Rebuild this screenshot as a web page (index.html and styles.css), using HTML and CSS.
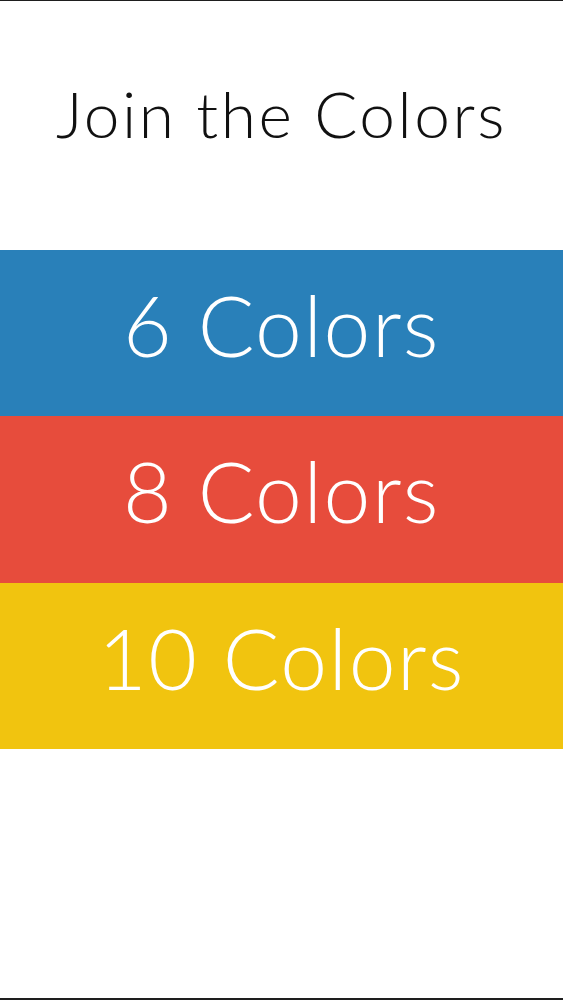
FILE: index.html
```html
<!DOCTYPE html>
<html lang="en">
<head>
<meta charset="utf-8">
<title>Join the Colors</title>
<link rel="stylesheet" href="styles.css">
</head>
<body>
<div class="screen">
  <header class="title-area">
    <h1 class="title">Join the Colors</h1>
  </header>
  <nav class="modes">
    <a class="mode mode-blue" href="#">6 Colors</a>
    <a class="mode mode-red" href="#">8 Colors</a>
    <a class="mode mode-yellow" href="#">10 Colors</a>
  </nav>
</div>
</body>
</html>
```

FILE: styles.css
```css
html, body {
  margin: 0;
  padding: 0;
  background: #fff;
}

.screen {
  box-sizing: border-box;
  height: 1000px;
  border-top: 1px solid #1e1e1e;
  border-bottom: 2px solid #1e1e1e;
  display: flex;
  flex-direction: column;
  font-family: "Lato", "Open Sans", sans-serif;
  font-weight: 300;
}

.title-area {
  height: 249px;
  display: flex;
  align-items: center;
  justify-content: center;
}

.title {
  margin: 0 0 24px 0;
  font-size: 64px;
  font-weight: 300;
  color: #111;
  letter-spacing: 2.5px;
}

.modes {
  display: flex;
  flex-direction: column;
}

.mode {
  box-sizing: border-box;
  display: flex;
  align-items: center;
  justify-content: center;
  height: 166px;
  padding-bottom: 18px;
  color: #fff;
  text-decoration: none;
  font-size: 84px;
  letter-spacing: 1.5px;
}

.mode-blue { background: #2980b9; }
.mode-red { background: #e74c3c; height: 167px; }
.mode-yellow { background: #f1c40f; }
```
